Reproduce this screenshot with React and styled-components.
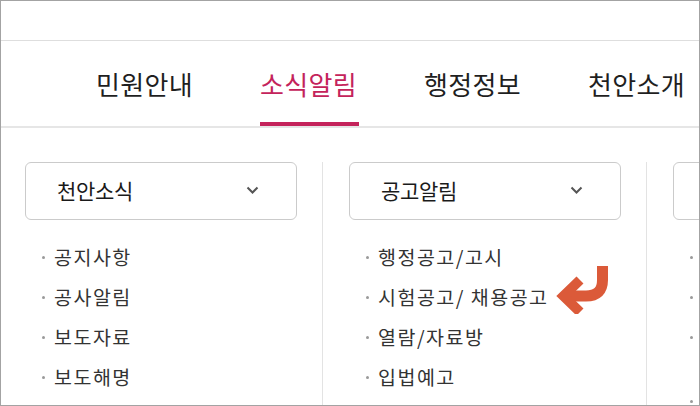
import React from "react";
import styled, { createGlobalStyle } from "styled-components";

const GlobalStyle = createGlobalStyle`
  html, body {
    margin: 0;
    padding: 0;
    background: #fff;
  }
  * {
    box-sizing: border-box;
  }
`;

const menus = ["민원안내", "소식알림", "행정정보", "천안소개"];

const columns = [
  {
    title: "천안소식",
    items: ["공지사항", "공사알림", "보도자료", "보도해명"],
  },
  {
    title: "공고알림",
    items: ["행정공고/고시", "시험공고/ 채용공고", "열람/자료방", "입법예고"],
    marked: 1,
  },
  {
    title: "행정정보",
    items: ["정보공개", "사전정보공표", "행정서비스헌장 및 고객만족도 조사결과", "법무행정"],
  },
];

function App() {
  return (
    <>
      <GlobalStyle />
      <Frame>
        <TopBar />
        <Nav>
          {menus.map((m) => (
            <NavItem key={m} $active={m === "소식알림"}>
              {m}
            </NavItem>
          ))}
        </Nav>
        <Columns>
          {columns.map((col) => (
            <Column key={col.title}>
              <Select>
                <span>{col.title}</span>
                <svg width="13" height="8" viewBox="0 0 13 8">
                  <polyline
                    points="1.5,1.5 6.5,6.5 11.5,1.5"
                    fill="none"
                    stroke="#555"
                    strokeWidth="2"
                  />
                </svg>
              </Select>
              <List>
                {col.items.map((it, i) => (
                  <Item key={it}>
                    {it}
                    {col.marked === i && (
                      <Arrow width="58" height="48" viewBox="0 0 58 48">
                        <path
                          d="M47.5 0 V14 Q47.5 30 31 30 H9"
                          fill="none"
                          stroke="#db5a39"
                          strokeWidth="11"
                        />
                        <path
                          d="M25 14 L8.5 30 L25 46"
                          fill="none"
                          stroke="#db5a39"
                          strokeWidth="10"
                          strokeLinejoin="miter"
                        />
                      </Arrow>
                    )}
                  </Item>
                ))}
              </List>
            </Column>
          ))}
        </Columns>
      </Frame>
    </>
  );
}

const Frame = styled.div`
  width: 700px;
  height: 406px;
  border: 1px solid #a3a3a3;
  overflow: hidden;
  background: #fff;
  font-family: "Noto Sans CJK KR", "Noto Sans", sans-serif;
  color: #222;
`;

const TopBar = styled.div`
  height: 40px;
  border-bottom: 1px solid #dedede;
`;

const Nav = styled.nav`
  display: flex;
  gap: 65px;
  height: 87px;
  padding-left: 95px;
  border-bottom: 2px solid #e6e6e6;
`;

const NavItem = styled.div`
  width: 99px;
  padding-top: 27px;
  font-size: 26px;
  line-height: 32px;
  letter-spacing: 0.3px;
  white-space: nowrap;
  color: ${(p) => (p.$active ? "#c4235b" : "#1f1f1f")};
  border-bottom: 4px solid ${(p) => (p.$active ? "#c4235b" : "transparent")};
`;

const Columns = styled.div`
  display: flex;
  margin-left: -2px;
  padding-top: 34px;
`;

const Column = styled.div`
  flex: 0 0 324px;
  padding-left: 26px;
  border-right: 1px solid #e3e3e3;
`;

const Select = styled.div`
  width: 272px;
  height: 58px;
  border: 1px solid #cbcbcb;
  border-radius: 6px;
  display: flex;
  align-items: center;
  justify-content: space-between;
  padding: 0 37px 2px 31px;
  font-size: 21px;
  letter-spacing: -0.3px;
  color: #1a1a1a;
  white-space: nowrap;
`;

const List = styled.ul`
  list-style: none;
  margin: 17px 0 0;
  padding: 0 0 0 17px;
`;

const Item = styled.li`
  position: relative;
  display: flex;
  align-items: flex-start;
  padding: 8px 0;
  font-size: 19.5px;
  line-height: 24px;
  letter-spacing: 1.5px;
  color: #333;
  width: 250px;
  &::before {
    content: "";
    flex: 0 0 3px;
    height: 3px;
    margin: 11px 9px 0 0;
    background: #9a9a9a;
    border-radius: 50%;
  }
`;

const Arrow = styled.svg`
  position: absolute;
  left: 189px;
  top: -11px;
`;

export default App;
